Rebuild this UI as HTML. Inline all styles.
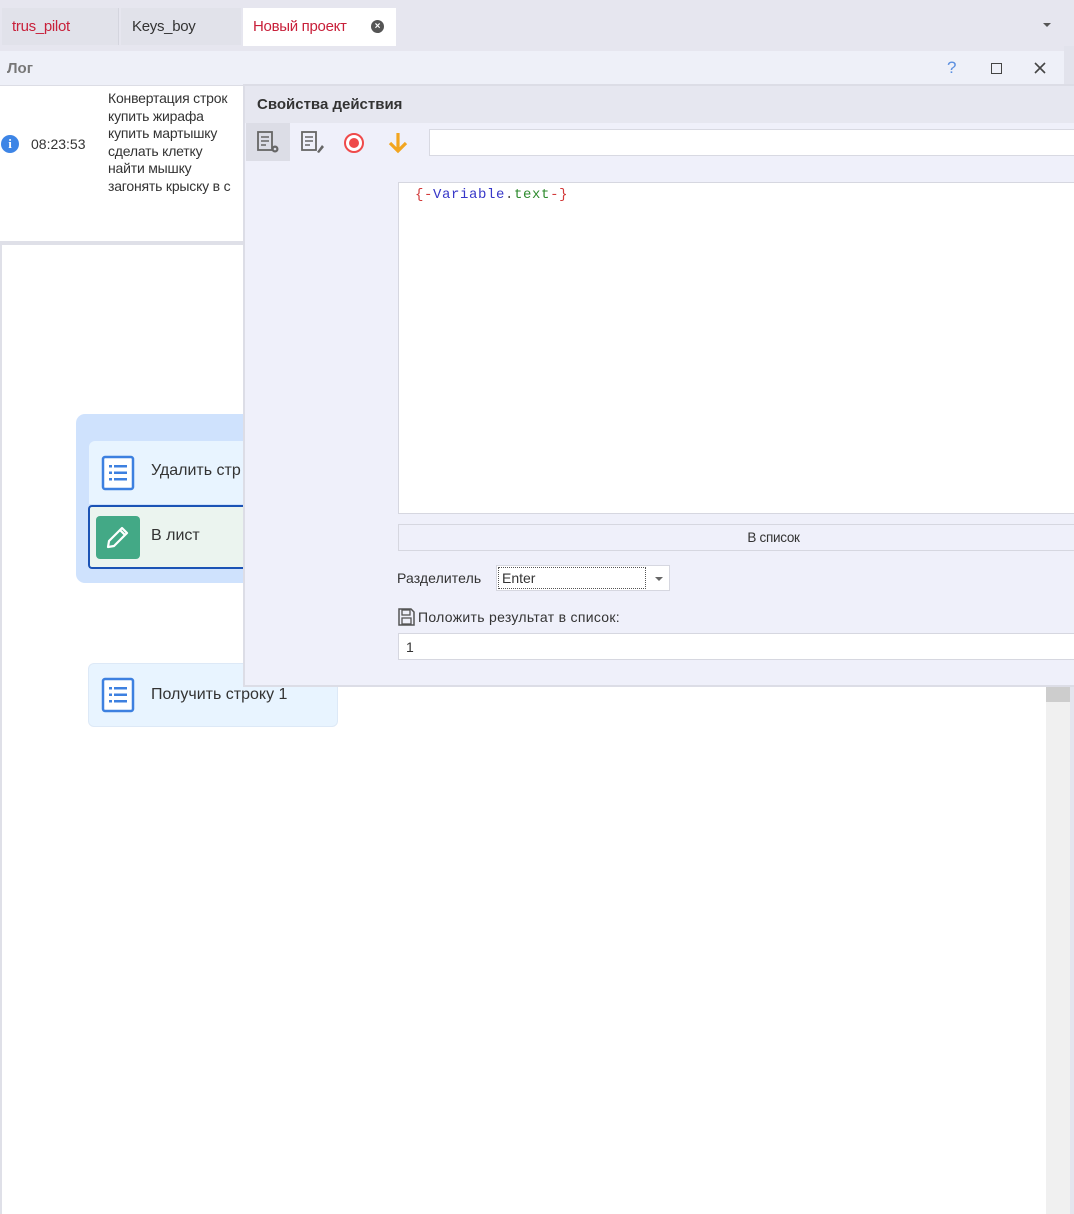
<!DOCTYPE html>
<html><head><meta charset="utf-8"><style>
*{box-sizing:border-box;margin:0;padding:0}
body{width:1074px;height:1214px;position:relative;overflow:hidden;background:#fff;font-family:"Liberation Sans","DejaVu Sans",sans-serif;font-size:14px;color:#333}
.a{position:absolute}
</style></head><body>
<div class="a" style="left:0;top:0;width:1074px;height:46px;background:#e6e6ef"></div>
<div class="a" style="top:8px;left:2px;width:117px;height:37px;background:#e1e2ea;border-right:1px solid #d4d5de"></div>
<div class="a" style="left:12px;top:18px;color:#c8203a;font-size:15px;letter-spacing:-0.3px">trus_pilot</div>
<div class="a" style="left:121px;top:8px;width:120px;height:37px;background:#e1e2ea"></div>
<div class="a" style="left:132px;top:18px;color:#333;font-size:15px;letter-spacing:-0.3px">Keys_boy</div>
<div class="a" style="left:243px;top:8px;width:153px;height:38px;background:#fff"></div>
<div class="a" style="left:253px;top:18px;color:#c8203a;font-size:15px;letter-spacing:-0.3px">Новый проект</div>
<div class="a" style="left:371px;top:20px;width:13px;height:13px;border-radius:50%;background:#555;color:#fff;font-size:10px;line-height:13px;text-align:center;font-weight:bold">×</div>
<div class="a" style="left:1043px;top:23px;border-left:4px solid transparent;border-right:4px solid transparent;border-top:4px solid #555"></div>
<div class="a" style="left:0;top:46px;width:1074px;height:5px;background:#e6e6ef"></div>
<div class="a" style="left:0;top:51px;width:1064px;height:35px;background:#eef0f8;border-bottom:1px solid #dcdde5"></div>
<div class="a" style="left:1064px;top:46px;width:10px;height:40px;background:#e2e3ec"></div>
<div class="a" style="left:7px;top:60px;font-weight:bold;color:#777;font-size:15px">Лог</div>
<div class="a" style="left:947px;top:58px;color:#5b8fe0;font-size:17px">?</div>
<div class="a" style="left:991px;top:63px;width:11px;height:11px;border:1.5px solid #444"></div>
<svg class="a" style="left:1034px;top:62px" width="12" height="12" viewBox="0 0 12 12"><path d="M1 1L11 11M11 1L1 11" stroke="#444" stroke-width="1.6"/></svg>
<div class="a" style="left:0;top:87px;width:245px;height:154px;background:#fff"></div>
<div class="a" style="left:1px;top:135px;width:18px;height:18px;border-radius:50%;background:#3d85e6;color:#fff;font-weight:bold;font-size:13px;text-align:center;line-height:18px;font-family:'Liberation Serif',serif">i</div>
<div class="a" style="left:31px;top:136px;font-size:14px;color:#333">08:23:53</div>
<div class="a" style="left:108px;top:90px;width:135px;overflow:hidden;white-space:nowrap;font-size:14px;line-height:17.6px;color:#333;letter-spacing:-0.2px">Конвертация строк<br>купить жирафа<br>купить мартышку<br>сделать клетку<br>найти мышку<br>загонять крыску в с</div>
<div class="a" style="left:0;top:241px;width:245px;height:4px;background:#dfe0e8"></div>
<div class="a" style="left:0;top:245px;width:2px;height:969px;background:#dfe0e8"></div>
<div class="a" style="left:76px;top:414px;width:180px;height:169px;background:#cfe2fd;border-radius:9px"></div>
<div class="a" style="left:89px;top:441px;width:170px;height:63px;background:#e8f4ff;border-radius:6px 0 0 0"></div>
<svg class="a" style="left:101px;top:455px" width="34" height="36" viewBox="0 0 34 36"><rect x="2" y="2" width="30" height="32" rx="2" fill="#fff" stroke="#3d80e0" stroke-width="2.5"/><g fill="#3d80e0"><rect x="8" y="10" width="3" height="2.5"/><rect x="13" y="10" width="13" height="2.5"/><rect x="8" y="16.5" width="3" height="2.5"/><rect x="13" y="16.5" width="13" height="2.5"/><rect x="8" y="23" width="3" height="2.5"/><rect x="13" y="23" width="13" height="2.5"/></g></svg>
<div class="a" style="left:151px;top:462px;font-size:16px;color:#333">Удалить стр</div>
<div class="a" style="left:88px;top:505px;width:170px;height:64px;background:#ebf4ef;border:2px solid #1b53b5;border-right:none;border-radius:4px 0 0 4px"></div>
<div class="a" style="left:96px;top:516px;width:44px;height:43px;background:#43a986;border-radius:4px"></div>
<svg class="a" style="left:104px;top:523px" width="28" height="28" viewBox="0 0 28 28"><path d="M4 24 L5 18 L18 5 L23 10 L10 23 Z M16 7 L21 12" fill="none" stroke="#fff" stroke-width="2.2" stroke-linejoin="round"/></svg>
<div class="a" style="left:151px;top:527px;font-size:16px;color:#333">В лист</div>
<div class="a" style="left:88px;top:663px;width:250px;height:64px;background:#e8f4ff;border-radius:6px;border:1px solid #dde9f7"></div>
<svg class="a" style="left:101px;top:677px" width="34" height="36" viewBox="0 0 34 36"><rect x="2" y="2" width="30" height="32" rx="2" fill="#fff" stroke="#3d80e0" stroke-width="2.5"/><g fill="#3d80e0"><rect x="8" y="10" width="3" height="2.5"/><rect x="13" y="10" width="13" height="2.5"/><rect x="8" y="16.5" width="3" height="2.5"/><rect x="13" y="16.5" width="13" height="2.5"/><rect x="8" y="23" width="3" height="2.5"/><rect x="13" y="23" width="13" height="2.5"/></g></svg>
<div class="a" style="left:151px;top:686px;font-size:16px;color:#333">Получить строку 1</div>
<div class="a" style="left:1046px;top:686px;width:24px;height:528px;background:#f0f0f0"></div>
<div class="a" style="left:1046px;top:686px;width:24px;height:16px;background:#cdcdcd"></div>
<div class="a" style="left:1070px;top:686px;width:4px;height:528px;background:#e4e5ee"></div>
<div class="a" style="left:243px;top:84px;width:831px;height:603px;background:#eff0fa;border:2px solid #dcdde6;border-right:none"></div>
<div class="a" style="left:245px;top:86px;width:829px;height:37px;background:#e6e7f0"></div>
<div class="a" style="left:257px;top:96px;font-weight:bold;font-size:15px;color:#333">Свойства действия</div>
<div class="a" style="left:246px;top:123px;width:44px;height:38px;background:#dcdde6"></div>
<svg class="a" style="left:256px;top:131px" width="26" height="24" viewBox="0 0 26 24"><rect x="2" y="1" width="14" height="18" fill="none" stroke="#666" stroke-width="1.8"/><path d="M5 6h8M5 10h8M5 14h5" stroke="#666" stroke-width="1.6"/><circle cx="19" cy="18" r="3.5" fill="#666"/><circle cx="19" cy="18" r="1.3" fill="#dcdde6"/></svg>
<svg class="a" style="left:300px;top:131px" width="26" height="24" viewBox="0 0 26 24"><rect x="2" y="1" width="14" height="18" fill="none" stroke="#666" stroke-width="1.8"/><path d="M5 6h8M5 10h8M5 14h5" stroke="#666" stroke-width="1.6"/><path d="M17 21 L22 14 L24 16 L19 22 Z" fill="#666"/></svg>
<div class="a" style="left:344px;top:133px;width:20px;height:20px;border-radius:50%;border:2px solid #ef4a4a;background:#fff"></div>
<div class="a" style="left:349px;top:138px;width:10px;height:10px;border-radius:50%;background:#ef4a4a"></div>
<svg class="a" style="left:387px;top:131px" width="22" height="24" viewBox="0 0 22 24"><path d="M11 2V20M3 12L11 20L19 12" fill="none" stroke="#f2a51f" stroke-width="3.2"/></svg>
<div class="a" style="left:429px;top:129px;width:645px;height:27px;background:#fff;border:1px solid #d8d9e2;border-right:none"></div>
<div class="a" style="left:398px;top:182px;width:676px;height:332px;background:#fff;border:1px solid #d6d7e0;border-right:none"></div>
<div class="a" style="left:415px;top:187px;font-family:'Liberation Mono',monospace;font-size:14px;letter-spacing:0.6px"><span style="color:#d23a3a">{-</span><span style="color:#3737c8">Variable</span><span style="color:#555">.</span><span style="color:#2e8b2e">text</span><span style="color:#d23a3a">-}</span></div>
<div class="a" style="left:398px;top:524px;width:676px;height:27px;background:#eff0fa;border:1px solid #d6d7e0;border-right:none;text-align:center;line-height:25px;font-size:13.5px;padding-left:74px;color:#333;letter-spacing:-0.3px">В список</div>
<div class="a" style="left:397px;top:570px;font-size:14px;color:#333;letter-spacing:0.1px">Разделитель</div>
<div class="a" style="left:496px;top:565px;width:174px;height:26px;background:#fff;border:1px solid #d6d7e0"></div>
<div class="a" style="left:498px;top:567px;width:148px;height:22px;border:1px dotted #555"></div>
<div class="a" style="left:502px;top:570px;font-size:14px;color:#333">Enter</div>
<div class="a" style="left:655px;top:577px;border-left:4px solid transparent;border-right:4px solid transparent;border-top:4px solid #666"></div>
<svg class="a" style="left:398px;top:608px" width="17" height="18" viewBox="0 0 17 18"><path d="M1 1H13L16 4V17H1Z" fill="none" stroke="#555" stroke-width="1.5"/><rect x="4" y="2" width="8" height="5" fill="none" stroke="#555" stroke-width="1.3"/><rect x="4" y="10" width="9" height="6" fill="none" stroke="#555" stroke-width="1.3"/></svg>
<div class="a" style="left:418px;top:609px;font-size:14px;color:#333;letter-spacing:0.3px">Положить результат в список:</div>
<div class="a" style="left:398px;top:633px;width:676px;height:27px;background:#fff;border:1px solid #d6d7e0;border-right:none"></div>
<div class="a" style="left:406px;top:639px;font-size:14px;color:#333">1</div>
</body></html>
